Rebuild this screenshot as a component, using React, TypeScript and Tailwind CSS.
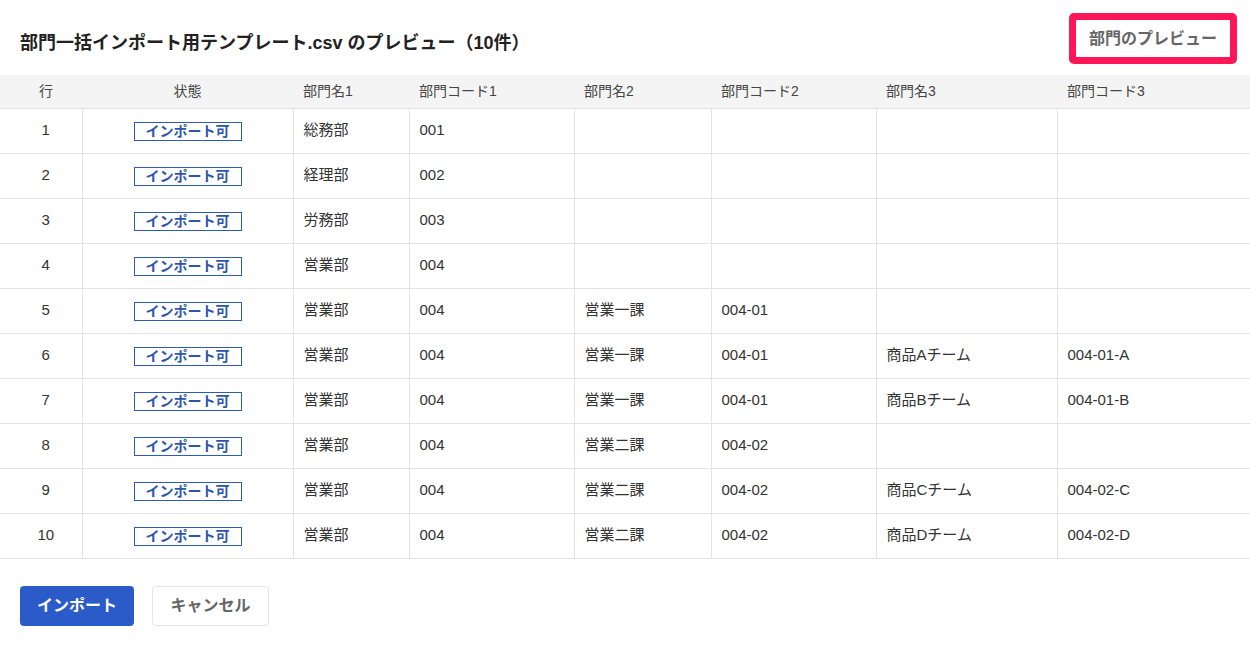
import React from "react";

const cols = [
  { key: "row", label: "行", w: 82, center: true },
  { key: "status", label: "状態", w: 211, center: true },
  { key: "n1", label: "部門名1", w: 116 },
  { key: "c1", label: "部門コード1", w: 165 },
  { key: "n2", label: "部門名2", w: 137 },
  { key: "c2", label: "部門コード2", w: 165 },
  { key: "n3", label: "部門名3", w: 181 },
  { key: "c3", label: "部門コード3", w: 193 },
];

const rows: string[][] = [
  ["1", "総務部", "001", "", "", "", ""],
  ["2", "経理部", "002", "", "", "", ""],
  ["3", "労務部", "003", "", "", "", ""],
  ["4", "営業部", "004", "", "", "", ""],
  ["5", "営業部", "004", "営業一課", "004-01", "", ""],
  ["6", "営業部", "004", "営業一課", "004-01", "商品Aチーム", "004-01-A"],
  ["7", "営業部", "004", "営業一課", "004-01", "商品Bチーム", "004-01-B"],
  ["8", "営業部", "004", "営業二課", "004-02", "", ""],
  ["9", "営業部", "004", "営業二課", "004-02", "商品Cチーム", "004-02-C"],
  ["10", "営業部", "004", "営業二課", "004-02", "商品Dチーム", "004-02-D"],
];

export default function App() {
  return (
    <div
      className="w-[1250px] h-[646px] bg-white text-[#333]"
      style={{ fontFamily: '"Liberation Sans", "Noto Sans CJK JP", sans-serif' }}
    >
      <div className="flex justify-between h-[75px]">
        <h1 className="pl-5 pt-[31px] text-[18px] leading-[24px] font-bold text-[#222]">
          部門一括インポート用テンプレート.csv のプレビュー（10件）
        </h1>
        <div className="mt-[13px] mr-[13px] w-[168px] h-[51px] rounded-[5px] border-[7px] border-[#ff1659] bg-white flex items-center justify-center">
          <span className="text-[16px] font-bold text-[#666]">部門のプレビュー</span>
        </div>
      </div>

      <table className="border-collapse table-fixed w-[1250px]">
        <colgroup>
          {cols.map((c) => (
            <col key={c.key} style={{ width: c.w }} />
          ))}
        </colgroup>
        <thead>
          <tr className="bg-[#f5f4f4] h-[33px] border-b border-[#e3e3e3]">
            {cols.map((c, i) => (
              <th
                key={c.key}
                className={`text-[14px] font-normal text-[#444] ${
                  c.center ? (i === 0 ? "text-center pl-[10px]" : "text-center") : "text-left pl-[10px]"
                }`}
              >
                {c.label}
              </th>
            ))}
          </tr>
        </thead>
        <tbody>
          {rows.map((r) => (
            <tr key={r[0]} className="h-[45px] border-b border-[#e3e3e3]">
              <td className="text-center pl-[10px] text-[15px] border-r border-[#e3e3e3]">{r[0]}</td>
              <td className="text-center border-r border-[#e3e3e3]">
                <span className="inline-block w-[108px] h-[19px] border border-[#2f5bb0] text-[#2c55ad] text-[14px] font-bold leading-[17px] align-middle">
                  インポート可
                </span>
              </td>
              {r.slice(1).map((v, i) => (
                <td
                  key={i}
                  className={`pl-[10px] text-[15px] ${i < 5 ? "border-r border-[#e3e3e3]" : ""}`}
                >
                  {v}
                </td>
              ))}
            </tr>
          ))}
        </tbody>
      </table>

      <div className="flex gap-[18px] pl-5 pt-[27px]">
        <button className="h-10 w-[114px] rounded bg-[#2b5bc9] text-white text-[16px] font-bold">
          インポート
        </button>
        <button className="h-10 w-[117px] rounded border border-[#e5e5e5] bg-white text-[#666] text-[16px] font-bold">
          キャンセル
        </button>
      </div>
    </div>
  );
}
